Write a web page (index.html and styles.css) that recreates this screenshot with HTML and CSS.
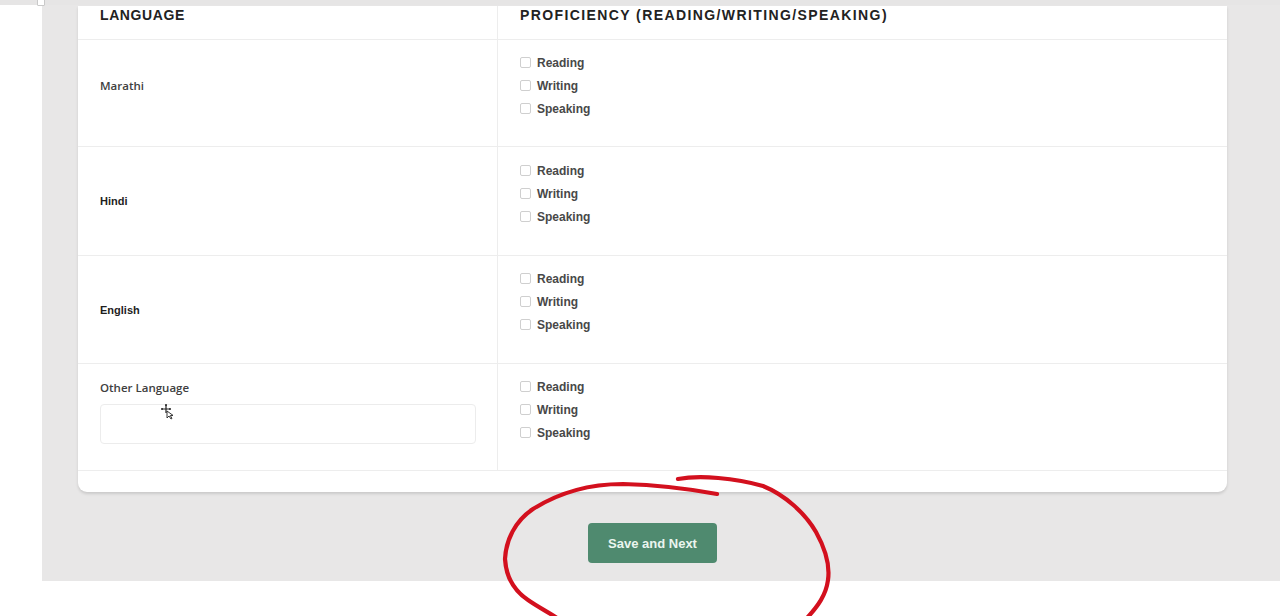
FILE: index.html
```html
<!DOCTYPE html>
<html lang="en">
<head>
<meta charset="utf-8">
<title>Language Proficiency</title>
<link rel="stylesheet" href="styles.css">
</head>
<body>
<div class="topstrip"></div>
<div class="main">
  <div class="gutter"></div>
  <div class="panel">
    <div class="card">
      <div class="table">
        <div class="cell head lang-col">LANGUAGE</div>
        <div class="cell head wide">PROFICIENCY (READING/WRITING/SPEAKING)</div>

        <div class="cell lang-col lang first">Marathi</div>
        <div class="cell prof">
          <label class="opt"><span class="box"></span>Reading</label>
          <label class="opt"><span class="box"></span>Writing</label>
          <label class="opt"><span class="box"></span>Speaking</label>
        </div>

        <div class="cell lang-col lang heavy">Hindi</div>
        <div class="cell prof lower">
          <label class="opt"><span class="box"></span>Reading</label>
          <label class="opt"><span class="box"></span>Writing</label>
          <label class="opt"><span class="box"></span>Speaking</label>
        </div>

        <div class="cell lang-col lang heavy">English</div>
        <div class="cell prof">
          <label class="opt"><span class="box"></span>Reading</label>
          <label class="opt"><span class="box"></span>Writing</label>
          <label class="opt"><span class="box"></span>Speaking</label>
        </div>

        <div class="cell lang-col other">
          <span class="other-label">Other Language</span>
          <div class="input"></div>
        </div>
        <div class="cell prof">
          <label class="opt"><span class="box"></span>Reading</label>
          <label class="opt"><span class="box"></span>Writing</label>
          <label class="opt"><span class="box"></span>Speaking</label>
        </div>
      </div>
    </div>
    <div class="actions">
      <button class="btn">Save and Next</button>
    </div>
  </div>
</div>

<span class="corner-mark"></span>

<svg class="cursor" width="14" height="16" viewBox="0 0 14 16">
  <path d="M5 1 L5 9 M1 5 L9 5" stroke="#222" stroke-width="1.2" fill="none"/>
  <circle cx="5" cy="1" r="1" fill="#222"/>
  <circle cx="1" cy="5" r="1" fill="#222"/>
  <circle cx="9" cy="5" r="1" fill="#222"/>
  <path d="M6 7 L6 14 L8 12 L10 15 L11 14.4 L9.3 11.6 L12 11.4 Z" fill="#fff" stroke="#222" stroke-width="0.9"/>
</svg>

<svg class="annot" width="1280" height="616" viewBox="0 0 1280 616">
  <path d="M717 494 C 690 489, 660 485, 623 484 C 590 484, 560 492, 533 509 C 515 521, 506 540, 505 559 C 506 575, 513 590, 528 600 C 538 607, 548 612, 557 618"
        fill="none" stroke="#d3101e" stroke-width="4.2" stroke-linecap="round"/>
  <path d="M678 479 C 700 475, 735 478, 763 486 C 785 495, 805 513, 816 532 C 826 550, 830 566, 828 580 C 826 595, 818 606, 807 618"
        fill="none" stroke="#d3101e" stroke-width="4.2" stroke-linecap="round"/>
</svg>
</body>
</html>
```

FILE: styles.css
```css
* { box-sizing: border-box; }

html, body {
  margin: 0;
  padding: 0;
  background: #ffffff;
  width: 1280px;
  height: 616px;
  overflow: hidden;
  font-family: "Liberation Sans", Arial, sans-serif;
}

.topstrip {
  height: 5px;
  background: #e6e5e5;
}

.main {
  display: flex;
}

.gutter {
  width: 42px;
  flex: none;
}

.panel {
  flex: 1;
  height: 576px;
  background: #e8e7e7;
  padding: 1px 53px 0 36px;
}

.card {
  background: #ffffff;
  border-radius: 0 0 9px 9px;
  box-shadow: 0 2px 3px rgba(0, 0, 0, 0.13);
  padding-bottom: 21px;
}

.table {
  display: grid;
  grid-template-columns: 420px 1fr;
  grid-template-rows: 34px 107px 109px 108px 107px;
}

.cell {
  border-bottom: 1px solid #ededed;
  padding: 0 22px;
}

.lang-col {
  border-right: 1px solid #ededed;
}

.head {
  padding-top: 1px;
  font-size: 14px;
  line-height: 16px;
  font-weight: 700;
  letter-spacing: 0.6px;
  color: #222222;
}

.head.wide {
  letter-spacing: 1.4px;
}

.lang {
  display: flex;
  align-items: center;
  font-size: 12px;
  font-weight: 700;
  color: #3c3c3c;
}

.lang.first {
  padding-bottom: 15px;
  font-weight: 600;
  font-family: "Open Sans", "Liberation Sans", sans-serif;
  font-size: 11.5px;
  color: #404040;
}

.lang.heavy {
  font-size: 11px;
  color: #1e1e1e;
}

.other {
  display: flex;
  flex-direction: column;
  padding-top: 17px;
}

.other-label {
  font-family: "Open Sans", "Liberation Sans", sans-serif;
  font-weight: 600;
  font-size: 11.5px;
  line-height: 14px;
  color: #404040;
}

.input {
  margin-top: 9px;
  width: 376px;
  height: 40px;
  border: 1px solid #ececec;
  border-radius: 4px;
  background: #ffffff;
}

.prof {
  display: flex;
  flex-direction: column;
  padding-top: 11px;
}

.prof.lower {
  padding-top: 12px;
}

.opt {
  display: flex;
  align-items: center;
  height: 23px;
  font-size: 12px;
  font-weight: 700;
  color: #484848;
}

.box {
  width: 11px;
  height: 11px;
  border: 1px solid #cfcfcf;
  border-radius: 2px;
  margin-right: 6px;
  background: #ffffff;
}

.actions {
  display: flex;
  justify-content: center;
  margin-top: 31px;
}

.btn {
  width: 129px;
  height: 40px;
  border: none;
  border-radius: 4px;
  background: #4f8a6f;
  color: #eaf5ee;
  font-family: "Liberation Sans", Arial, sans-serif;
  font-weight: 700;
  font-size: 13px;
  padding: 0;
}

.corner-mark {
  position: absolute;
  left: 37px;
  top: -2px;
  width: 8px;
  height: 8px;
  border: 1px solid #c9c9c9;
  background: #ffffff;
  border-radius: 1px;
}

.cursor {
  position: absolute;
  left: 161px;
  top: 404px;
}

.annot {
  position: absolute;
  left: 0;
  top: 0;
  pointer-events: none;
}
```
